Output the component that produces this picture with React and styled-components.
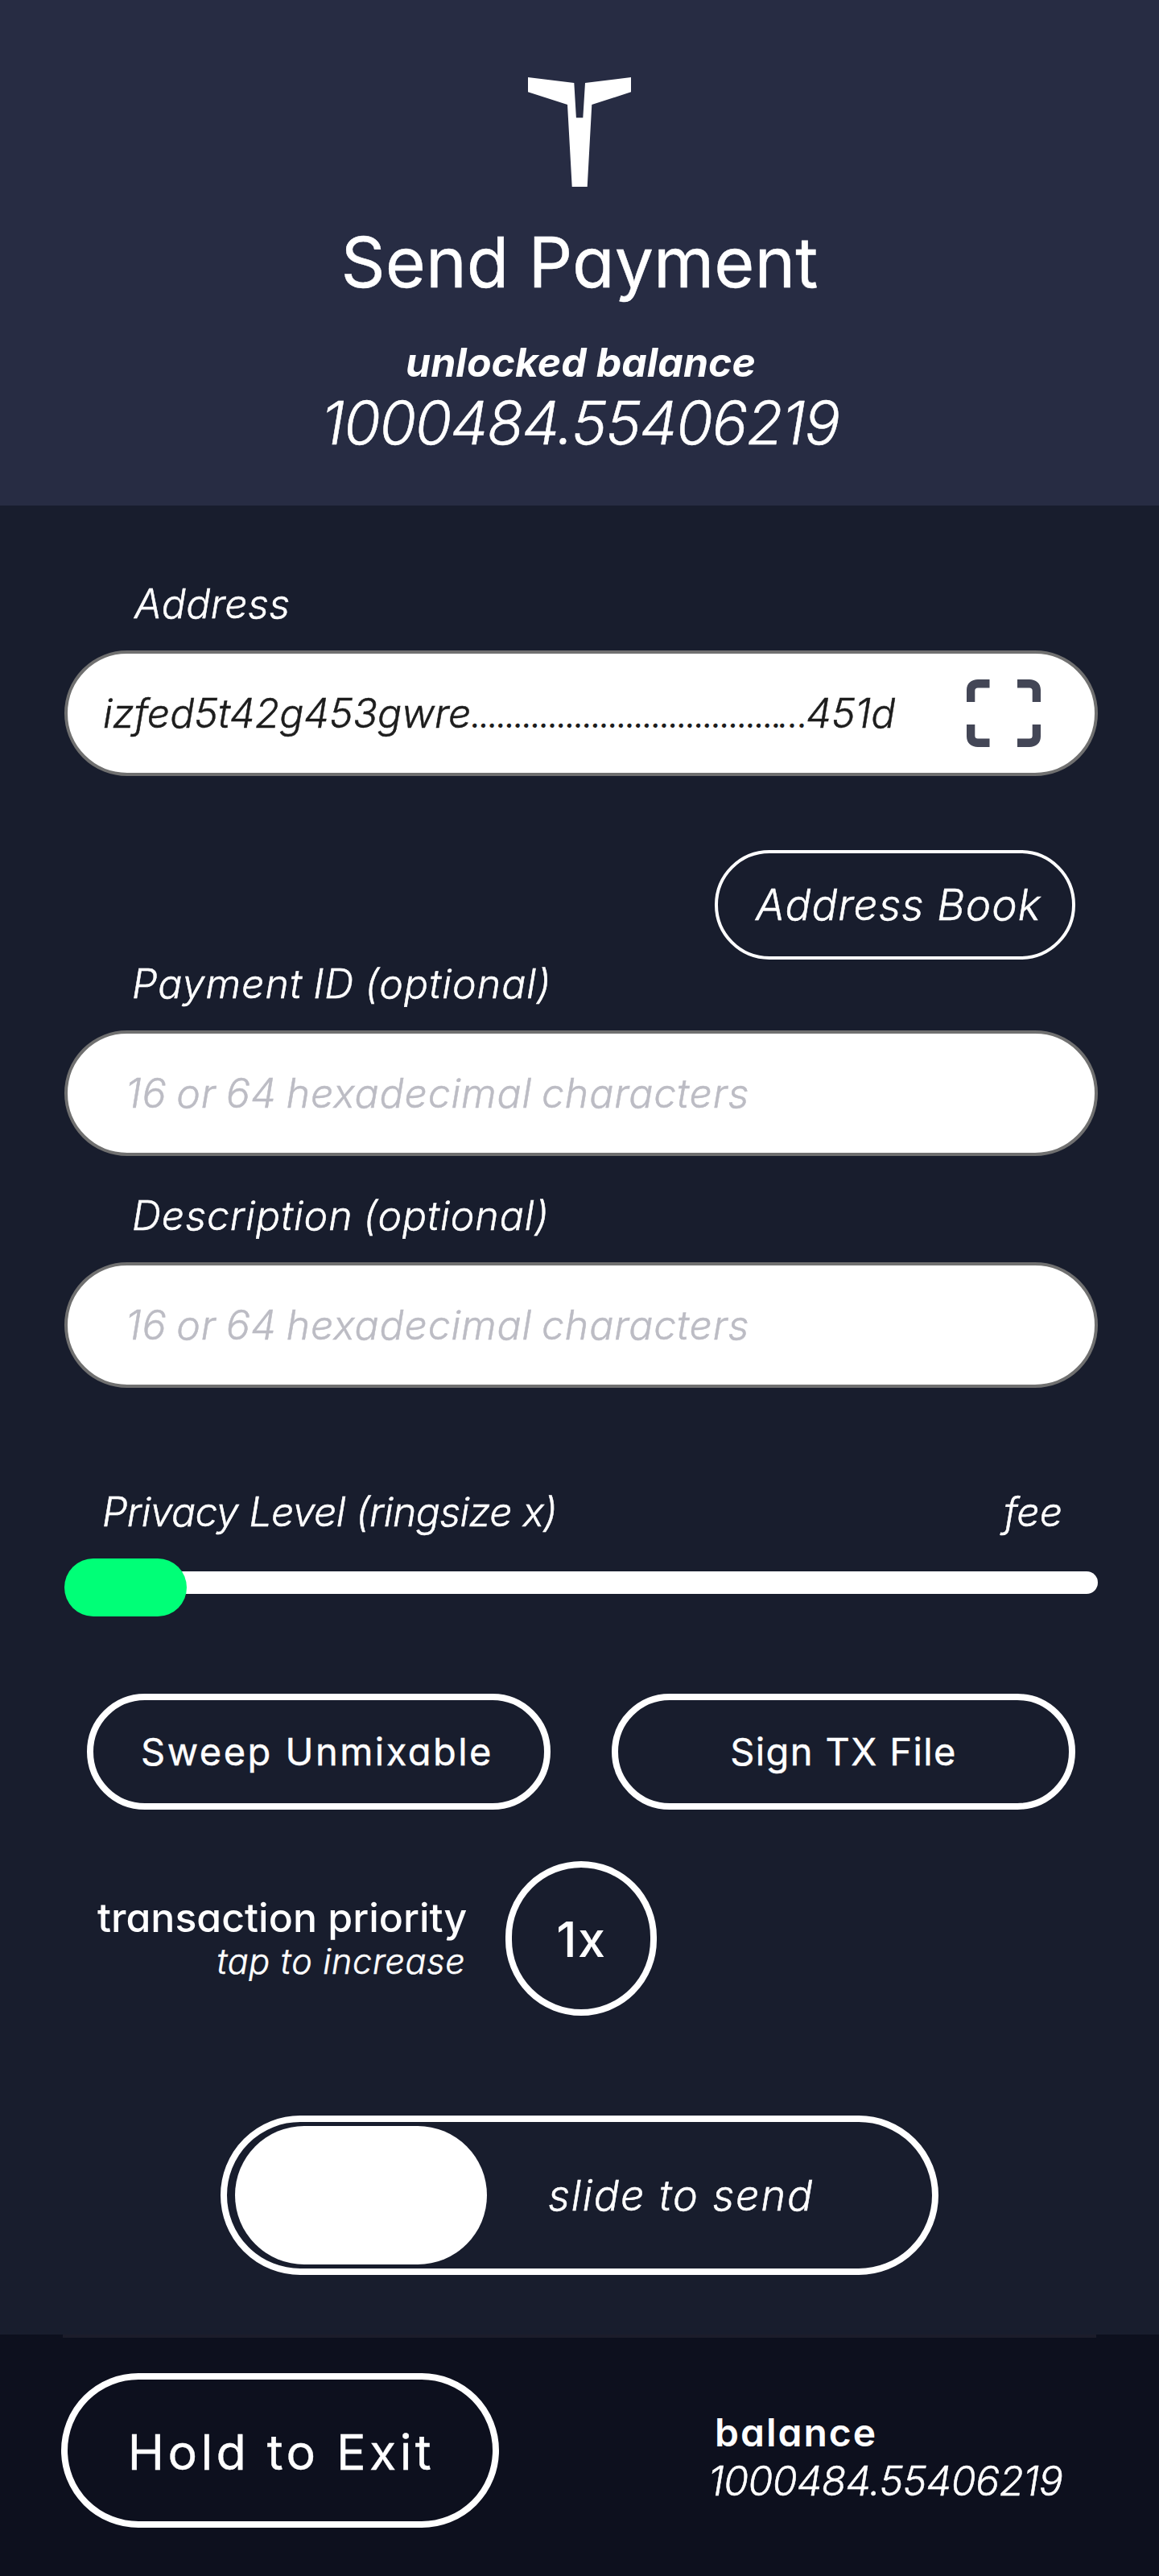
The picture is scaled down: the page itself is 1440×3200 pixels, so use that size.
import React from "react";
import styled, { createGlobalStyle } from "styled-components";

const GlobalStyle = createGlobalStyle`
  * { box-sizing: border-box; }
  body {
    margin: 0;
    background: #181d2d;
    color: #fff;
    font-family: Inter, "Liberation Sans", sans-serif;
    font-feature-settings: "cv11";
  }
  button {
    color: inherit;
    font: inherit;
    font-feature-settings: inherit;
  }
`;

const Screen = styled.div`
  display: flex;
  flex-direction: column;
  width: 1440px;
  height: 3200px;
  overflow: hidden;
`;

const Text = styled.span`
  display: block;
  white-space: pre;
  font-size: ${(p) => p.$size || 50}px;
  font-weight: ${(p) => p.$weight || 300};
  font-style: ${(p) => (p.$upright ? "normal" : "italic")};
  letter-spacing: ${(p) => p.$track || 0}px;
  word-spacing: ${(p) => p.$word || 0}px;
  line-height: ${(p) => p.$line || 60}px;
  -webkit-text-stroke: ${(p) => (p.$weight ? 0 : 0.5)}px currentColor;
`;

const Header = styled.header`
  display: flex;
  flex-direction: column;
  align-items: center;
  height: 628px;
  padding-top: 96px;
  background: #272c43;
`;

const Logo = styled.svg`
  display: block;
  width: 128px;
  height: 136px;
`;

const Title = styled(Text)`
  margin: 44px 0;
  -webkit-text-stroke-width: 0.4px;
`;

const BalanceCaption = styled(Text)`
  padding-left: 3px;
`;

const HeaderAmount = styled(Text)`
  margin-top: 5px;
  padding-left: 2px;
`;

const Main = styled.main`
  display: flex;
  flex-direction: column;
  height: 2272px;
  padding: 92px 76px 0 80px;
`;

const Field = styled.label`
  display: flex;
  flex-direction: column;
  gap: 28px;
  margin-top: ${(p) => p.$top || 0}px;
`;

const FieldLabel = styled(Text)`
  padding-left: ${(p) => p.$indent || 84}px;
`;

const InputBox = styled.div`
  display: flex;
  align-items: center;
  justify-content: space-between;
  height: 156px;
  padding: 0 67px 0 ${(p) => p.$indent || 72}px;
  border: 4px solid #707070;
  border-radius: 78px;
  background: #fff;
  color: ${(p) => (p.$filled ? "#1d1d1d" : "#bcbcc4")};
`;

const AddressValue = styled.div`
  display: flex;
  align-items: baseline;
`;

const Dots = styled.div`
  display: flex;
  align-items: baseline;
  width: 416px;
`;

const DotRun = styled(Text)`
  width: ${(p) => p.$width}px;
`;

const AddressBookButton = styled.button`
  display: flex;
  align-items: center;
  align-self: flex-end;
  width: 448px;
  height: 136px;
  margin: 92px 28px 0 0;
  padding: 0 0 0 47px;
  border: 4px solid #fff;
  border-radius: 68px;
  background: transparent;
`;

const SliderLabels = styled.div`
  display: flex;
  justify-content: space-between;
  margin-top: 124px;
  padding: 0 44px 0 47px;
`;

const Slider = styled.div`
  display: grid;
  height: 72px;
  margin-top: 28px;
`;

const Track = styled.div`
  grid-area: 1 / 1;
  height: 28px;
  margin: 16px 0 0 40px;
  border-radius: 14px;
  background: #fff;
`;

const Thumb = styled.div`
  grid-area: 1 / 1;
  width: 152px;
  height: 72px;
  border-radius: 36px;
  background: #00ff77;
`;

const Actions = styled.div`
  display: flex;
  justify-content: space-between;
  margin-top: 96px;
  padding: 0 28px;
`;

const PillButton = styled.button`
  display: flex;
  align-items: center;
  justify-content: center;
  width: ${(p) => p.$width}px;
  height: ${(p) => p.$height}px;
  padding: 0 ${(p) => p.$trail || 0}px 0 0;
  border: 8px solid #fff;
  border-radius: 99px;
  background: transparent;
`;

const ActionLabel = styled(Text)`
  -webkit-text-stroke-width: 0.4px;
`;

const PriorityRow = styled.div`
  display: flex;
  align-items: center;
  gap: 48px;
  margin-top: 64px;
  padding-left: 41px;
`;

const PriorityText = styled.div`
  display: flex;
  flex-direction: column;
  align-items: flex-end;
  padding-bottom: 4px;
`;

const PriorityHint = styled(Text)`
  padding-right: 2px;
`;

const PriorityButton = styled(PillButton)`
  padding-top: 2px;
`;

const SendSlider = styled.div`
  display: flex;
  align-items: center;
  gap: 76px;
  width: 892px;
  height: 198px;
  margin: 124px 0 0 194px;
  padding: 0 0 0 10px;
  border: 8px solid #fff;
  border-radius: 99px;
`;

const SendThumb = styled.div`
  width: 313px;
  height: 172px;
  border-radius: 86px;
  background: #fff;
`;

const SendLabel = styled(Text)`
  padding-top: 2px;
`;

const Footer = styled.footer`
  height: 300px;
  background: #0d101e;
`;

const Divider = styled.div`
  height: 4px;
  margin: 0 78px;
  background: #1c1d2b;
`;

const FooterContent = styled.div`
  display: flex;
  gap: 260px;
  padding: 44px 0 0 76px;
`;

const ExitLabel = styled(ActionLabel)`
  padding: 3px 0 0 3px;
`;

const FooterBalance = styled.div`
  display: flex;
  flex-direction: column;
  padding-top: 44px;
`;

const FooterCaption = styled(Text)`
  padding-left: 8px;
`;

function TurtleMark() {
  return (
    <Logo viewBox="0 0 128 136" aria-hidden="true">
      <path
        fill="#fff"
        d="M0 0 57.3 7 59.9 50.3H68.3L71 7 128 0V18.3L79.3 34 73.7 136H54.7L49 34 0 18.3Z"
      />
    </Logo>
  );
}

function ScanIcon() {
  return (
    <svg width="92" height="84" viewBox="0 0 92 84" fill="#434656" aria-hidden="true">
      <path d="M0 28V13C0 5 6 0 14 0H28.5V10.5H14Q10.3 10.5 10.3 14V28Z" />
      <path d="M92 28V13C92 5 86 0 78 0H63V10.5H78Q81.7 10.5 81.7 14V28Z" />
      <path d="M0 56V71C0 79 6 84 14 84H28.5V73.5H14Q10.3 73.5 10.3 70V56Z" />
      <path d="M92 56V71C92 79 86 84 78 84H63V73.5H78Q81.7 73.5 81.7 70V56Z" />
    </svg>
  );
}

export default function App() {
  return (
    <Screen>
      <GlobalStyle />
      <Header>
        <TurtleMark />
        <Title $size={86} $weight={400} $line={100} $upright>Send Payment</Title>
        <BalanceCaption $weight={700}>unlocked balance</BalanceCaption>
        <HeaderAmount $size={74} $line={80} $track={-1.35}>1000484.55406219</HeaderAmount>
      </Header>

      <Main>
        <Field>
          <FieldLabel $indent={87} $track={0.37}>Address</FieldLabel>
          <InputBox $indent={44} $filled>
            <AddressValue>
              <Text>izfed5t42g453gwre</Text>
              <Dots>
                <DotRun $width={382} $size={33.6} $line={40} $weight={600}>{"…".repeat(12)}</DotRun>
                <DotRun $width={34} $size={33.6} $line={40} $weight={600} $track={1.5}>...</DotRun>
              </Dots>
              <Text>451d</Text>
            </AddressValue>
            <ScanIcon />
          </InputBox>
        </Field>

        <AddressBookButton>
          <Text $size={53} $track={1.03}>Address Book</Text>
        </AddressBookButton>

        <Field>
          <FieldLabel $track={1.05} $word={-2}>Payment ID (optional)</FieldLabel>
          <InputBox>
            <Text $track={0.86} $word={-3}>16 or 64 hexadecimal characters</Text>
          </InputBox>
        </Field>

        <Field $top={44}>
          <FieldLabel $track={0.95} $word={-2}>Description (optional)</FieldLabel>
          <InputBox>
            <Text $track={0.86} $word={-3}>16 or 64 hexadecimal characters</Text>
          </InputBox>
        </Field>

        <SliderLabels>
          <Text $track={-0.63}>Privacy Level (ringsize x)</Text>
          <Text>fee</Text>
        </SliderLabels>
        <Slider>
          <Track />
          <Thumb />
        </Slider>

        <Actions>
          <PillButton $width={576} $height={144} $trail={4}>
            <ActionLabel $size={47} $weight={400} $track={2.47} $upright>Sweep Unmixable</ActionLabel>
          </PillButton>
          <PillButton $width={576} $height={144}>
            <ActionLabel $size={47} $weight={400} $track={1.39} $upright>Sign TX File</ActionLabel>
          </PillButton>
        </Actions>

        <PriorityRow>
          <PriorityText>
            <Text $weight={500} $upright>transaction priority</Text>
            <PriorityHint $size={43} $line={48} $track={0.75}>tap to increase</PriorityHint>
          </PriorityText>
          <PriorityButton $width={188} $height={192}>
            <Text $size={61} $weight={500} $track={1.5} $upright>1x</Text>
          </PriorityButton>
        </PriorityRow>

        <SendSlider>
          <SendThumb />
          <SendLabel $size={52} $track={1.9}>slide to send</SendLabel>
        </SendSlider>
      </Main>

      <Footer>
        <Divider />
        <FooterContent>
          <PillButton $width={544} $height={192}>
            <ExitLabel $size={61} $weight={400} $track={4.36} $upright>Hold to Exit</ExitLabel>
          </PillButton>
          <FooterBalance>
            <FooterCaption $size={48} $weight={600} $track={2} $upright>balance</FooterCaption>
            <Text $track={-0.57}>1000484.55406219</Text>
          </FooterBalance>
        </FooterContent>
      </Footer>
    </Screen>
  );
}
